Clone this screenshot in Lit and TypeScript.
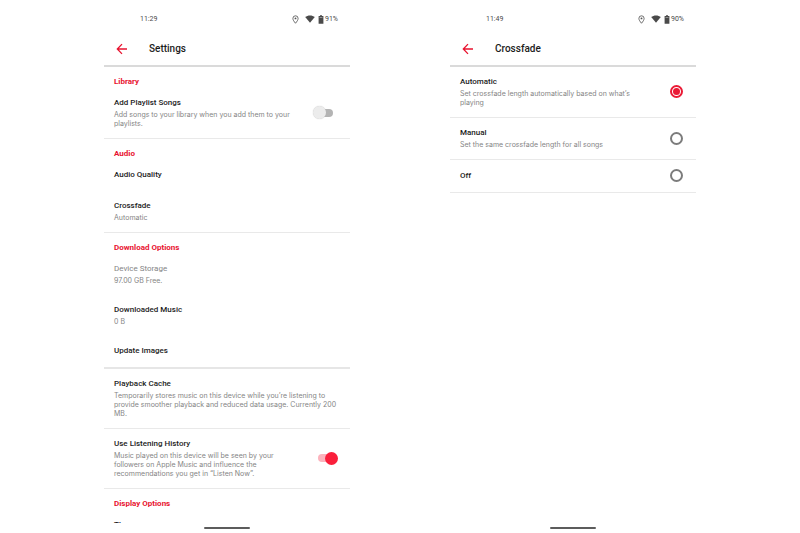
import { LitElement, html, css, nothing } from "lit";
import { customElement, property } from "lit/decorators.js";

interface Item {
  title: string;
  note?: string;
  muted?: boolean;
  toggle?: boolean;
}

interface Section {
  heading?: string;
  strong?: boolean;
  items: Item[];
}

const SECTIONS: Section[] = [
  {
    heading: "Library",
    items: [
      {
        title: "Add Playlist Songs",
        note: "Add songs to your library when you add them to your playlists.",
        toggle: false,
      },
    ],
  },
  {
    heading: "Audio",
    items: [{ title: "Audio Quality" }, { title: "Crossfade", note: "Automatic" }],
  },
  {
    heading: "Download Options",
    strong: true,
    items: [
      { title: "Device Storage", note: "97.00 GB Free.", muted: true },
      { title: "Downloaded Music", note: "0 B" },
      { title: "Update Images" },
    ],
  },
  {
    items: [
      {
        title: "Playback Cache",
        note: "Temporarily stores music on this device while you’re listening to provide smoother playback and reduced data usage. Currently 200 MB.",
      },
    ],
  },
  {
    items: [
      {
        title: "Use Listening History",
        note: "Music played on this device will be seen by your followers on Apple Music and influence the recommendations you get in “Listen Now”.",
        toggle: true,
      },
    ],
  },
  { heading: "Display Options", items: [{ title: "Theme" }] },
];

const MODES: Item[] = [
  { title: "Automatic", note: "Set crossfade length automatically based on what’s playing" },
  { title: "Manual", note: "Set the same crossfade length for all songs" },
  { title: "Off" },
];

const rowStyles = css`
  * {
    box-sizing: border-box;
  }
  .row {
    display: flex;
    align-items: center;
    gap: 20px;
    padding: 9px 12px 10px 10px;
  }
  .text {
    flex: 1;
    min-width: 0;
  }
  .title {
    display: block;
    font-size: 8px;
    line-height: 12px;
    font-weight: 500;
    color: #1c1c1c;
  }
  .note {
    display: block;
    margin-top: 1px;
    font-family: Inter, Roboto, sans-serif;
    font-size: 7px;
    line-height: 9px;
    color: #858585;
  }
  .muted {
    font-weight: 400;
    color: #858585;
  }
`;

@customElement("phone-screen")
export class PhoneScreen extends LitElement {
  @property() heading = "";
  @property() time = "";
  @property() battery = "";

  static styles = css`
    :host {
      display: flex;
      flex-direction: column;
      height: 100vh;
      min-width: 0;
    }
    .status {
      display: flex;
      align-items: center;
      height: 38px;
      padding: 0 12px 0 36px;
      font-size: 7px;
      line-height: 8px;
      color: #4a4a4a;
      flex: none;
    }
    .icons {
      display: flex;
      align-items: center;
      margin-left: auto;
    }
    .pin {
      margin-right: 6px;
    }
    .wifi {
      margin-right: 3px;
    }
    .cell {
      margin-right: 1px;
    }
    .bar {
      display: flex;
      align-items: center;
      gap: 21px;
      height: 29px;
      padding: 0 12px 6px;
      border-bottom: 2px solid #dadada;
      flex: none;
      box-sizing: border-box;
    }
    .back {
      display: flex;
      padding: 0;
      border: 0;
      background: none;
      cursor: pointer;
    }
    h1 {
      margin: 0;
      font-size: 10px;
      line-height: 14px;
      font-weight: 500;
      color: #1c1c1c;
    }
    main {
      flex: 1;
      min-height: 0;
      overflow: hidden;
    }
    .home {
      flex: none;
      height: 10px;
      display: flex;
      justify-content: center;
      align-items: center;
    }
    .pill {
      width: 46px;
      height: 2px;
      border-radius: 1px;
      background: #5c5c5c;
    }
  `;

  render() {
    return html`
      <div class="status">
        <span>${this.time}</span>
        <span class="icons">
          <svg class="pin" width="7" height="9" viewBox="0 0 14 18" fill="none" aria-hidden="true">
            <path d="M7 16.5C4 12.8 1.8 10 1.8 6.8a5.2 5.2 0 0 1 10.4 0C12.2 10 10 12.8 7 16.5z" stroke="#555" stroke-width="1.7" />
            <circle cx="7" cy="6.8" r="1.9" fill="#555" />
          </svg>
          <svg class="wifi" width="10" height="8" viewBox="0 0 20 16" aria-hidden="true">
            <path d="M10 15.5L.4 4.2C3 1.9 6.3.8 10 .8s7 1.1 9.6 3.4z" fill="#4a4a4a" />
          </svg>
          <svg class="cell" width="6" height="9" viewBox="0 0 12 18" aria-hidden="true">
            <path d="M4 .5h4v1.7h2.8v15.3H1.2V2.2H4z" fill="#4a4a4a" />
            <path d="M3 4h6v1.5H3z" fill="#aaa" />
          </svg>
          <span>${this.battery}</span>
        </span>
      </div>
      <header class="bar">
        <button class="back" aria-label="Back">
          <svg width="12" height="12" viewBox="0 0 24 24" fill="none" stroke="#e8132f" stroke-width="2.6">
            <path d="M22 12H3M12 2.2L2.6 12l9.4 9.8" />
          </svg>
        </button>
        <h1>${this.heading}</h1>
      </header>
      <main><slot></slot></main>
      <div class="home"><div class="pill"></div></div>
    `;
  }
}

@customElement("settings-list")
export class SettingsList extends LitElement {
  static styles = [
    rowStyles,
    css`
      :host {
        display: block;
      }
      section {
        border-bottom: 1px solid #e9e9e9;
      }
      .strong {
        border-bottom: 2px solid #e6e6e6;
      }
      h2 {
        margin: 0;
        padding: 9px 10px 0;
        font-size: 8px;
        line-height: 12px;
        font-weight: 700;
        color: #e8132f;
      }
      .switch {
        appearance: none;
        display: grid;
        align-items: center;
        flex: none;
        width: 25px;
        height: 13px;
        margin: 0;
        cursor: pointer;
      }
      .switch::before,
      .switch::after {
        content: "";
        grid-area: 1 / 1;
      }
      .switch::before {
        justify-self: center;
        width: 15px;
        height: 8px;
        border-radius: 4px;
        background: #b4b4b4;
      }
      .switch::after {
        width: 13px;
        height: 13px;
        border-radius: 50%;
        background: #ececec;
        box-shadow: 0 0 1px #bbbbbb;
      }
      .switch:checked::before {
        background: #fcb3bd;
      }
      .switch:checked::after {
        justify-self: end;
        background: #fa1f3b;
        box-shadow: none;
      }
    `,
  ];

  private row(item: Item) {
    const text = html`<span class="text">
      <span class="title ${item.muted ? "muted" : ""}">${item.title}</span>
      ${item.note ? html`<span class="note">${item.note}</span>` : nothing}
    </span>`;
    return item.toggle === undefined
      ? html`<div class="row">${text}</div>`
      : html`<label class="row">
          ${text}<input class="switch" type="checkbox" role="switch" .checked=${item.toggle} />
        </label>`;
  }

  render() {
    return SECTIONS.map(
      (s) => html`<section class=${s.strong ? "strong" : ""}>
        ${s.heading ? html`<h2>${s.heading}</h2>` : nothing} ${s.items.map((i) => this.row(i))}
      </section>`,
    );
  }
}

@customElement("crossfade-list")
export class CrossfadeList extends LitElement {
  static styles = [
    rowStyles,
    css`
      :host {
        display: block;
      }
      .row {
        padding-right: 13px;
        border-bottom: 1px solid #e9e9e9;
      }
      .radio {
        appearance: none;
        display: grid;
        place-items: center;
        flex: none;
        width: 13px;
        height: 13px;
        margin: 0;
        border: 2px solid #7c7c7c;
        border-radius: 50%;
        cursor: pointer;
      }
      .radio:checked {
        border-color: #ea1a35;
      }
      .radio:checked::before {
        content: "";
        width: 7px;
        height: 7px;
        border-radius: 50%;
        background: #ea1a35;
      }
    `,
  ];

  render() {
    return MODES.map(
      (m, i) => html`<label class="row">
        <span class="text">
          <span class="title">${m.title}</span>
          ${m.note ? html`<span class="note">${m.note}</span>` : nothing}
        </span>
        <input class="radio" type="radio" name="mode" .checked=${i === 0} />
      </label>`,
    );
  }
}

@customElement("app-root")
export class AppRoot extends LitElement {
  static styles = css`
    :host {
      display: grid;
      grid-template-columns: 1fr 1fr;
      gap: 100px;
      padding: 0 104px;
      background: #ffffff;
      font-family: Roboto, "Liberation Sans", sans-serif;
    }
  `;

  render() {
    return html`
      <phone-screen heading="Settings" time="11:29" battery="91%">
        <settings-list></settings-list>
      </phone-screen>
      <phone-screen heading="Crossfade" time="11:49" battery="90%">
        <crossfade-list></crossfade-list>
      </phone-screen>
    `;
  }
}
